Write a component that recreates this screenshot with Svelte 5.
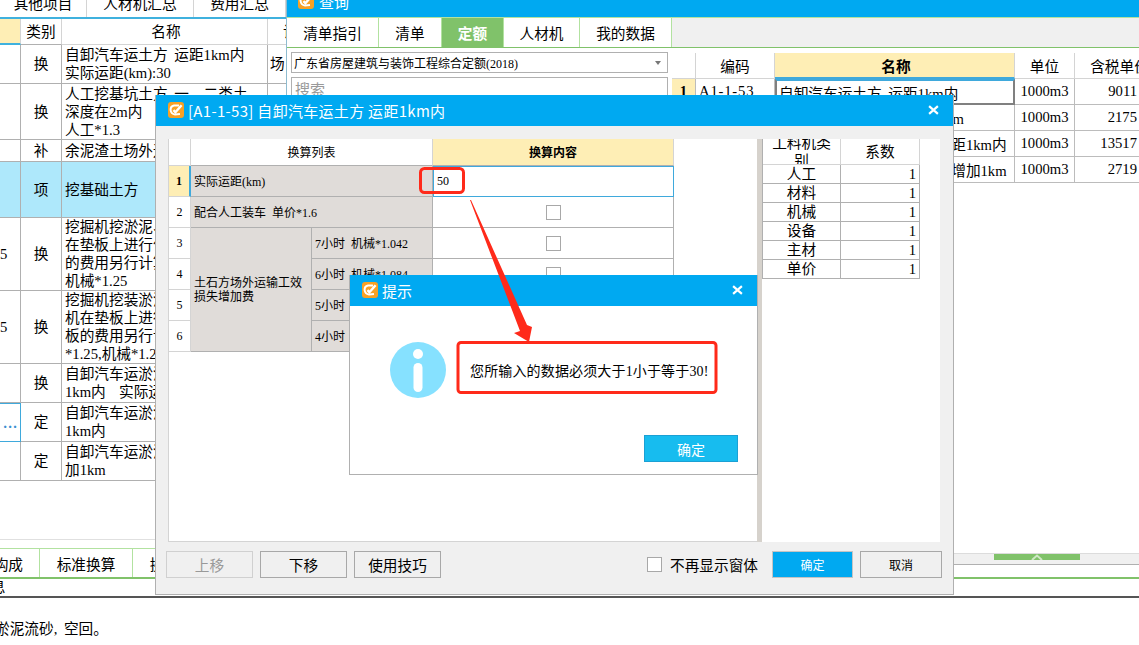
<script>
  // 后面主窗口的清单行
  const rows = [
    { h: 39, no: '', type: '换', name: '自卸汽车运土方 运距1km内\n实际运距(km):30', extra: '场' },
    { h: 56, no: '', type: '换', name: '人工挖基坑土方 一、二类土\n深度在2m内\n人工*1.3' },
    { h: 22, no: '', type: '补', name: '余泥渣土场外运输' },
    { h: 56, no: '', type: '项', name: '挖基础土方', hl: true },
    { h: 73, no: '5', type: '换', name: '挖掘机挖淤泥、流砂\n在垫板上进行作业时\n的费用另行计算\n机械*1.25' },
    { h: 73, no: '5', type: '换', name: '挖掘机挖装淤泥流砂\n机在垫板上进行作业\n板的费用另行计算\n*1.25,机械*1.25' },
    { h: 39, no: '', type: '换', name: '自卸汽车运淤泥流砂\n1km内  实际运距' },
    { h: 39, no: '…', type: '定', name: '自卸汽车运淤泥流砂\n1km内', sel: true },
    { h: 39, no: '', type: '定', name: '自卸汽车运淤泥流砂\n加1km' }
  ];

  const quotaRows = [
    { name: '自卸汽车运土方 运距1km内', unit: '1000m3', price: '9011', active: true },
    { name: '自卸汽车运土方  每增加1km', unit: '1000m3', price: '2175' },
    { name: '自卸汽车运淤泥流砂    运距1km内', unit: '1000m3', price: '13517' },
    { name: '自卸汽车运淤泥流砂    每增加1km', unit: '1000m3', price: '2719' }
  ];

  const factors = ['人工', '材料', '机械', '设备', '主材', '单价'];
  const hours = ['7小时 机械*1.042', '6小时 机械*1.084', '5小时 机械*1.126', '4小时 机械*1.168'];
</script>

{#snippet logo()}
  <svg class="logo" viewBox="0 0 16 16" width="16" height="16">
    <rect x="0" y="0" width="16" height="16" rx="3" fill="#f8a125" />
    <path d="M11 3.4 L6 3.6 Q2.4 4.4 2.6 8 Q3 12 7 12.4 L12 12" fill="none" stroke="#fff" stroke-width="2" />
    <path d="M5.4 8.2 L7.4 10.2 L13.6 3.2" fill="none" stroke="#fff" stroke-width="2.4" />
  </svg>
{/snippet}

{#snippet closeIcon()}
  <svg class="close" viewBox="0 0 10 9" width="11" height="10">
    <path d="M1 1 L9 8 M9 1 L1 8" stroke="#fff" stroke-width="2" fill="none" />
  </svg>
{/snippet}

<div class="screen">
  <!-- 主窗口 -->
  <section class="main-win">
    <nav class="top-tabs">
      <span style="width:87px">其他项目</span>
      <span style="width:107px">人材机汇总</span>
      <span style="width:92px">费用汇总</span>
    </nav>
    <div class="table-wrap">
      <div class="bill-row head">
        <div class="c-no yellow"></div>
        <div class="c-type">类别</div>
        <div class="c-name center">名称</div>
        <div class="c-extra">计</div>
      </div>
      {#each rows as row}
        <div class="bill-row" class:hl={row.hl} style="height:{row.h}px">
          <div class="c-no" class:sel={row.sel}>{row.no}</div>
          <div class="c-type">{row.type}</div>
          <div class="c-name">{row.name}</div>
          <div class="c-extra">{row.extra ?? ''}</div>
        </div>
      {/each}
    </div>
    <div class="spacer"></div>
    <div class="strip-top"></div>
    <nav class="bottom-tabs">
      <span class="first">工料机构成</span>
      <span class="std">标准换算</span>
      <span>换算信息</span>
    </nav>
    <div class="info-label">信息</div>
    <div class="desc">淤泥流砂, 空回。</div>
  </section>

  <!-- 查询窗口 -->
  <section class="query-win">
    <header class="query-title">{@render logo()}<span>查询</span></header>
    <nav class="query-tabs">
      <span style="width:92px">清单指引</span>
      <span style="width:63px">清单</span>
      <span class="on" style="width:62px">定额</span>
      <span style="width:76px">人材机</span>
      <span style="width:92px">我的数据</span>
    </nav>
    <div class="query-body">
      <div class="left-pane">
        <div class="select">广东省房屋建筑与装饰工程综合定额(2018)<i class="caret"></i></div>
        <div class="search">搜索</div>
      </div>
      <div class="quota">
        <div class="q-row q-head">
          <div class="q-no"></div>
          <div class="q-code">编码</div>
          <div class="q-name cur">名称</div>
          <div class="q-unit">单位</div>
          <div class="q-price">含税单价</div>
        </div>
        {#each quotaRows as q, i}
          <div class="q-row">
            <div class="q-no" class:cur={q.active}>{i + 1}</div>
            <div class="q-code code">A1-1-{53 + i}</div>
            <div class="q-name" class:active={q.active}>{q.name}</div>
            <div class="q-unit">{q.unit}</div>
            <div class="q-price num">{q.price}</div>
          </div>
        {/each}
      </div>
    </div>
    <div class="splitter"><b><svg viewBox="0 0 12 7" width="12" height="7"><path d="M1 6 L6 1.5 L11 6" stroke="#cfe8c6" stroke-width="2" fill="none" /></svg></b></div>
  </section>

  <!-- 标准换算对话框 -->
  <section class="dlg-convert">
    <header class="title wide">{@render logo()}<span>[A1-1-53] 自卸汽车运土方 运距1km内</span>{@render closeIcon()}</header>
    <div class="convert-body">
      <div class="convert-left">
        <div class="convert-grid">
          <div class="g-idx"></div>
          <div class="g-head span2">换算列表</div>
          <div class="g-head yellow bold">换算内容</div>

          <div class="g-idx yellow bold cur-idx">1</div>
          <div class="g-cell span2">实际运距(km)</div>
          <div class="g-input">50</div>

          <div class="g-idx">2</div>
          <div class="g-cell span2">配合人工装车 单价*1.6</div>
          <div class="g-check"><i class="box"></i></div>

          <div class="g-idx">3</div>
          <div class="g-cell merged">土石方场外运输工效损失增加费</div>
          <div class="g-cell">{hours[0]}</div>
          <div class="g-check"><i class="box"></i></div>

          <div class="g-idx">4</div>
          <div class="g-cell">{hours[1]}</div>
          <div class="g-check"><i class="box"></i></div>

          <div class="g-idx">5</div>
          <div class="g-cell">{hours[2]}</div>
          <div class="g-check"><i class="box"></i></div>

          <div class="g-idx">6</div>
          <div class="g-cell">{hours[3]}</div>
          <div class="g-check"><i class="box"></i></div>
        </div>
      </div>
      <div class="convert-split"></div>
      <div class="convert-right">
        <div class="factor-grid">
          <div class="f-head wrap">工料机类别</div>
          <div class="f-head">系数</div>
          {#each factors as f}
            <div class="f-name">{f}</div>
            <div class="f-val">1</div>
          {/each}
        </div>
      </div>
    </div>
    <footer class="convert-foot">
      <button class="btn" disabled>上移</button>
      <button class="btn">下移</button>
      <button class="btn">使用技巧</button>
      <label class="no-show"><i class="box"></i>不再显示窗体</label>
      <button class="btn small primary">确定</button>
      <button class="btn small">取消</button>
    </footer>
  </section>

  <!-- 提示框 -->
  <section class="dlg-tip">
    <header class="title">{@render logo()}<span>提示</span>{@render closeIcon()}</header>
    <div class="tip-body">
      <svg class="info" viewBox="0 0 56 56" width="56" height="56">
        <circle cx="28" cy="28" r="28" fill="#86e1ff" />
        <circle cx="28" cy="12" r="5" fill="#fff" />
        <rect x="23.5" y="21" width="9" height="29" rx="4.5" fill="#fff" />
      </svg>
      <p>您所输入的数据必须大于1小于等于30!</p>
    </div>
    <div class="tip-foot"><button class="tip-ok">确定</button></div>
  </section>

  <!-- 截图上的红色标注 -->
  <svg class="marks" viewBox="0 0 1139 645" width="1139" height="645">
    <rect x="420.5" y="168.5" width="43" height="24" rx="4" fill="none" stroke="#ff2a1a" stroke-width="3" />
    <rect x="458" y="342.5" width="258" height="50" rx="3" fill="none" stroke="#ff2a1a" stroke-width="3" />
    <polygon points="470,200 471,200 527,325 532,327 529,342 514,333 520,331" fill="#ff2a1a" />
  </svg>
</div>

<style>
  :global(body) {
    margin: 0;
    background: #fff;
    color: #000;
    font-family: "Liberation Serif", "Noto Sans CJK SC", serif;
    font-size: 14.67px;
    word-spacing: 3px;
  }
  .screen {
    position: relative;
    width: 1139px;
    height: 645px;
    overflow: hidden;
    background: #fff;
  }
  .yellow { background: #feeeb5; }
  .bold { font-weight: 700; }
  .center { text-align: center; justify-content: center; }

  /* 主窗口 */
  .main-win {
    position: absolute;
    left: 0;
    top: -12px;
    width: 1139px;
    height: 657px;
    display: flex;
    flex-direction: column;
  }
  .top-tabs {
    display: flex;
    height: 29px;
    flex: none;
    border-bottom: 2px solid #3fb1de;
  }
  .top-tabs span {
    display: flex;
    align-items: center;
    justify-content: center;
    border-right: 1px solid #d4d4d4;
    box-sizing: border-box;
  }
  .bill-row {
    display: grid;
    grid-template-columns: 21px 41px 206px 100px;
    background: #fff;
  }
  .bill-row > div {
    border-right: 1px solid #b0b0b0;
    border-bottom: 1px solid #b0b0b0;
    box-sizing: border-box;
    display: flex;
    align-items: center;
    overflow: hidden;
    white-space: pre;
    line-height: 18px;
  }
  .bill-row.head { height: 26px; }
  .bill-row.head > div {
    border-color: #d4d4d4;
    justify-content: center;
  }
  .bill-row.head .c-no { border-bottom: 2px solid #3fb1de; }
  .bill-row.head .c-type { border-bottom-color: #b0b0b0; }
  .bill-row.head .c-extra { justify-content: flex-start; padding-left: 15px; }
  .c-type { justify-content: center; }
  .c-name { padding-left: 3px; }
  .c-extra { padding-left: 2px; }
  .hl > div { background: #aee8fb; }
  .bill-row > .sel {
    border: 1px solid #3fa9dc;
    border-left: none;
    color: #3a8fd0;
    justify-content: center;
    font-weight: 700;
  }
  .spacer { flex: 1; }
  .strip-top {
    height: 8px;
    flex: none;
    border-top: 1px solid #e0e0e0;
  }
  .bottom-tabs {
    display: flex;
    height: 31px;
    flex: none;
    border-top: 1px solid #b2e2a0;
    border-bottom: 2px solid #80c26a;
    box-sizing: border-box;
  }
  .bottom-tabs span {
    border-right: 1px solid #b2e2a0;
    display: flex;
    align-items: center;
    justify-content: center;
    width: 92px;
  }
  .bottom-tabs .first {
    width: 92px;
    margin-left: -52px;
    justify-content: flex-end;
    padding-right: 16px;
    box-sizing: border-box;
  }
  .info-label {
    height: 17px;
    line-height: 16px;
    margin-left: -24px;
    flex: none;
  }
  .desc {
    border-top: 2px solid #555;
    height: 26px;
    padding-top: 21px;
    text-indent: -5px;
    flex: none;
    line-height: 20px;
  }

  /* 查询窗口 */
  .query-win {
    position: absolute;
    left: 286px;
    top: -12px;
    width: 853px;
    height: 577px;
    background: #fff;
    display: flex;
    flex-direction: column;
    border-left: 1px solid #8fbcd0;
    box-sizing: border-box;
  }
  .query-title {
    height: 29px;
    flex: none;
    background: #00a9f1;
    color: #fff;
    display: flex;
    align-items: center;
    gap: 5px;
    padding: 0 0 3px 11px;
    box-sizing: border-box;
    font: 15px "Noto Sans CJK SC", sans-serif;
  }
  .query-tabs {
    display: flex;
    height: 31px;
    flex: none;
    background: #f0f0f0;
    border-top: 1px solid #b2e2a0;
    border-bottom: 1px solid #80c26a;
    box-sizing: border-box;
  }
  .query-tabs span {
    display: flex;
    align-items: center;
    justify-content: center;
    background: #fff;
    border-right: 1px solid #b2e2a0;
    box-sizing: border-box;
  }
  .query-tabs .on {
    background: #80c26a;
    color: #fff;
    font-weight: 700;
  }
  .query-body {
    flex: 1;
    display: flex;
    min-height: 0;
  }
  .left-pane {
    width: 385px;
    padding: 4px 0 0 4px;
    box-sizing: border-box;
    flex: none;
    font-size: 12px;
  }
  .select, .search {
    width: 377px;
    border: 1px solid #b0b0b0;
    box-sizing: border-box;
    display: flex;
    align-items: center;
    position: relative;
  }
  .select {
    height: 21px;
    padding-left: 2px;
    margin-bottom: 4px;
  }
  .search {
    height: 22px;
    padding-left: 3px;
    font-size: 15px;
    color: #999;
  }
  .caret {
    position: absolute;
    right: 6px;
    top: 8px;
    border-left: 3px solid transparent;
    border-right: 3px solid transparent;
    border-top: 4px solid #777;
  }
  .quota { flex: 1; padding-top: 5px; overflow: hidden; }
  .q-row {
    display: grid;
    grid-template-columns: 24px 79px 240px 60px 90px;
    height: 26px;
  }
  .q-row > div {
    border-right: 1px solid #bcbcbc;
    border-bottom: 1px solid #bcbcbc;
    box-sizing: border-box;
    display: flex;
    align-items: center;
    justify-content: center;
    overflow: hidden;
    white-space: pre;
  }
  .q-head > div { border-color: #d4d4d4; }
  .q-head .q-name.cur {
    background: #feeeb5;
    font-weight: 700;
    border-bottom: 2px solid #3fa9dc;
  }
  .q-no.cur { background: #feeeb5; font-weight: 700; }
  .q-row > .code { justify-content: flex-start; padding-left: 3px; letter-spacing: 0.8px; }
  .q-row > .q-name { justify-content: flex-start; padding-left: 3px; }
  .q-head > .q-name { justify-content: center; }
  .q-row > .q-name.active { border: 2px solid #808080; border-top-color: #3fa9dc; padding-left: 2px; }
  .q-row > .num { justify-content: flex-end; padding-right: 27px; }
  .splitter {
    margin-top: auto;
    height: 10px;
    flex: none;
    background: #f0f0f0;
    border-top: 1px solid #dcdcdc;
    border-bottom: 1px solid #b0b0b0;
    display: flex;
    justify-content: flex-end;
    padding-right: 59px;
  }
  .splitter b {
    width: 86px;
    height: 6px;
    background: #80c26a;
    display: flex;
    justify-content: center;
    overflow: hidden;
  }

  /* 对话框公共 */
  .title {
    height: 31px;
    flex: none;
    background: #00a9f1;
    color: #fff;
    display: flex;
    align-items: center;
    padding: 0 0 1px 12px;
    box-sizing: border-box;
    gap: 4px;
    word-spacing: 0;
    font: 15px "Noto Sans CJK SC", sans-serif;
  }
  .title.wide { letter-spacing: 0.3px; }
  .close { margin-left: auto; margin-right: 14px; }
  .logo { flex: none; }
  .box {
    display: block;
    width: 15px;
    height: 15px;
    box-sizing: border-box;
    border: 1px solid #a8a8a8;
    background: #fff;
  }

  /* 换算对话框 */
  .dlg-convert {
    position: absolute;
    left: 155px;
    top: 95px;
    width: 799px;
    height: 500px;
    background: #f0f0f0;
    border: 1px solid #b0b0b0;
    border-top: none;
    box-sizing: border-box;
    display: flex;
    flex-direction: column;
  }
  .convert-body {
    height: 403px;
    margin: 13px 0 0 12px;
    display: flex;
    flex: none;
  }
  .convert-left {
    width: 589px;
    background: #fff;
    border-left: 1px solid #d4d4d4;
    border-bottom: 1px solid #d4d4d4;
    box-sizing: border-box;
  }
  .convert-grid {
    display: grid;
    grid-template-columns: 22px 121px 121px 241px;
    grid-template-rows: 27px repeat(6, 31px);
    font-size: 12px;
    width: 505px;
  }
  .convert-grid > div {
    box-sizing: border-box;
    display: flex;
    align-items: center;
    overflow: hidden;
  }
  .g-idx {
    justify-content: center;
    border-right: 1px solid #d4d4d4;
    border-bottom: 1px solid #d4d4d4;
  }
  .convert-grid > .cur-idx { border-right: 2px solid #3fa9dc; }
  .g-head {
    justify-content: center;
    border-right: 1px solid #d4d4d4;
    border-bottom: 1px solid #b0b0b0;
  }
  .span2 { grid-column: span 2; }
  .g-cell {
    background: #e0dcd9;
    border-right: 1px solid #b0b0b0;
    border-bottom: 1px solid #b0b0b0;
    padding-left: 3px;
    white-space: nowrap;
  }
  .convert-grid > .merged {
    grid-row: span 4;
    white-space: normal;
    line-height: 14px;
    padding-right: 4px;
  }
  .g-input {
    border: 1px solid #3fa9dc;
    padding-left: 3px;
    background: #fff;
  }
  .g-check {
    justify-content: center;
    border-right: 1px solid #b0b0b0;
    border-bottom: 1px solid #b0b0b0;
  }
  .convert-split {
    width: 5px;
    background: #d6d2cc;
    flex: none;
  }
  .convert-right {
    width: 178px;
    background: #fff;
    flex: none;
  }
  .factor-grid {
    display: grid;
    grid-template-columns: 78px 79px;
    grid-template-rows: 26px repeat(6, 19px);
    border-left: 1px solid #b0b0b0;
    width: 158px;
    box-sizing: border-box;
  }
  .factor-grid > div {
    border-right: 1px solid #b0b0b0;
    border-bottom: 1px solid #b0b0b0;
    box-sizing: border-box;
    display: flex;
    align-items: center;
    justify-content: center;
    overflow: hidden;
    line-height: 16px;
  }
  .factor-grid > .f-head {
    border-color: #d4d4d4;
    text-align: center;
    line-height: 18px;
  }
  .factor-grid > .f-head.wrap { padding: 0 5px; }
  .factor-grid > .f-val { justify-content: flex-end; padding-right: 3px; }
  .convert-foot {
    display: flex;
    align-items: center;
    margin: 9px 11px 0 10px;
    height: 27px;
  }
  .btn {
    width: 87px;
    height: 27px;
    margin-right: 7px;
    padding: 0;
    background: #f0f0f0;
    border: 1px solid #a8a8a8;
    font: inherit;
    color: #000;
  }
  .btn:disabled { color: #999; border-color: #d0d0d0; }
  .btn.small { font-size: 12px; width: 82px; margin-right: 0; }
  .btn.primary {
    background: #00a9f1;
    border-color: #c4c4c4;
    color: #fff;
    width: 81px;
    margin-right: 7px;
  }
  .no-show {
    margin-left: auto;
    margin-right: 14px;
    display: flex;
    align-items: center;
    gap: 8px;
  }

  /* 提示框 */
  .dlg-tip {
    position: absolute;
    left: 349px;
    top: 275px;
    width: 409px;
    height: 200px;
    background: #fff;
    border: 1px solid #b0b0b0;
    border-top: none;
    box-sizing: border-box;
    display: flex;
    flex-direction: column;
  }
  .tip-body {
    display: flex;
    align-items: center;
    margin: 36px 0 0 40px;
    height: 56px;
  }
  .tip-body p {
    margin: 0 0 0 24px;
    font-size: 14px;
    letter-spacing: 0.15px;
    white-space: nowrap;
  }
  .tip-foot {
    margin-top: auto;
    margin-bottom: 12px;
    display: flex;
    justify-content: flex-end;
    padding-right: 19px;
  }
  .tip-ok {
    width: 94px;
    height: 27px;
    padding: 0;
    background: #17bcef;
    border: 1px solid #1ba0d4;
    color: #fff;
    font: inherit;
    font-size: 14px;
  }
  .marks {
    position: absolute;
    left: 0;
    top: 0;
    pointer-events: none;
  }
</style>
